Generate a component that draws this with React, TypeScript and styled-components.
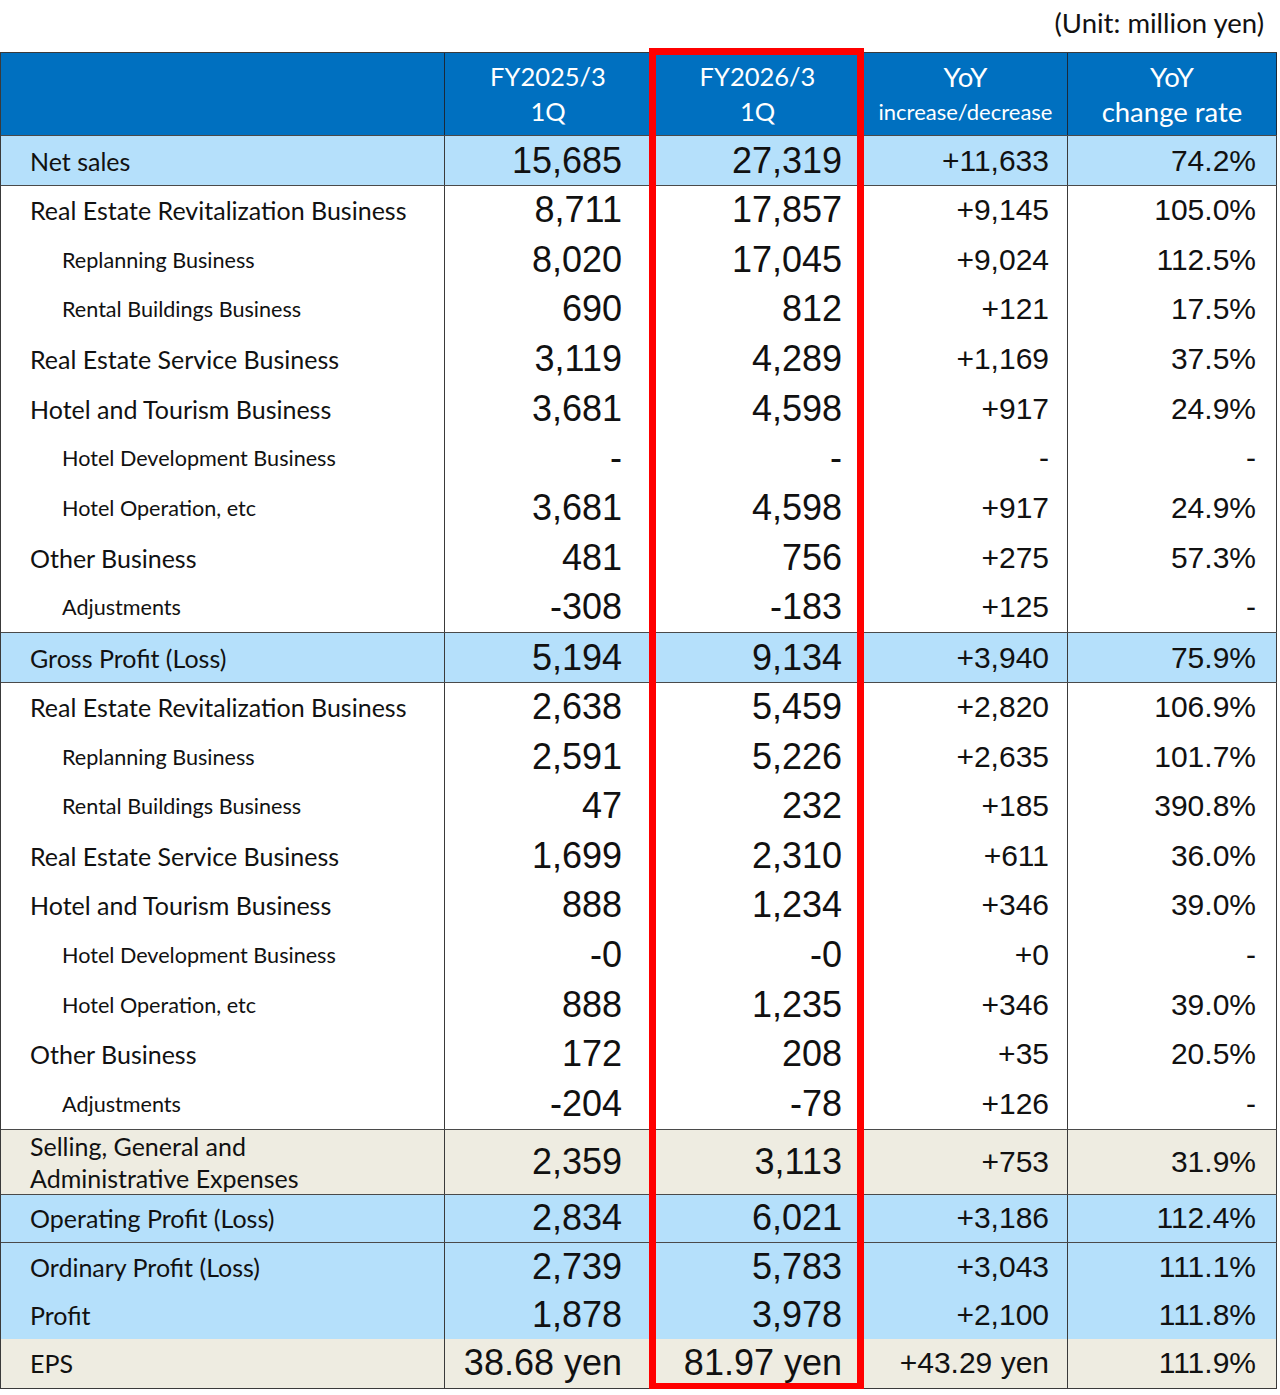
import React from "react";
import styled, { createGlobalStyle } from "styled-components";

const Global = createGlobalStyle`
  html, body { margin: 0; padding: 0; background: #ffffff; }
  body { font-family: "Lato", "Open Sans", sans-serif; color: #000; }
`;

type Kind = "blue" | "white" | "beige";

const bg: Record<Kind, string> = {
  blue: "#b5e0fb",
  white: "#ffffff",
  beige: "#eeece1",
};

const Page = styled.div`
  width: 1280px;
  position: relative;
`;

const Unit = styled.div`
  height: 52px;
  box-sizing: border-box;
  padding-right: 16px;
  text-align: right;
  font-size: 27.5px;
  line-height: 46px;
  color: #111;
`;

const TableWrap = styled.div`
  position: relative;
  width: 1277px;
`;

const Table = styled.div`
  border-left: 1px solid #3a3a3a;
  border-top: 1px solid #3a3a3a;
  border-bottom: 1px solid #3a3a3a;
`;

const Row = styled.div<{ $kind: Kind; $h: number; $line?: boolean }>`
  display: grid;
  grid-template-columns: 444px 207px 212px 204px 209px;
  height: ${(p) => p.$h}px;
  background: ${(p) => bg[p.$kind]};
  box-sizing: border-box;
  border-top: ${(p) => (p.$line ? "1.5px solid #4a4a4a" : "none")};
`;

const HeaderRow = styled.div`
  display: grid;
  grid-template-columns: 444px 207px 212px 204px 209px;
  height: 82px;
  background: #0070c0;
  color: #fff;
`;

const HeadCell = styled.div<{ $size?: number }>`
  border-right: 1px solid #1a2a3a;
  display: flex;
  flex-direction: column;
  align-items: center;
  justify-content: center;
  font-size: ${(p) => p.$size ?? 25.5}px;
  line-height: 35px;
  text-align: center;
`;

const HeadSmall = styled.span`
  font-size: 22px;
  line-height: 36px;
`;

const LabelCell = styled.div<{ $indent?: boolean }>`
  border-right: 1px solid #3a3a3a;
  display: flex;
  align-items: center;
  padding-left: ${(p) => (p.$indent ? 61 : 29)}px;
  font-size: ${(p) => (p.$indent ? 21.6 : 25)}px;
  line-height: 32px;
  color: #111;
`;

const NumCell = styled.div<{ $big?: boolean; $pad: number }>`
  border-right: 1px solid #3a3a3a;
  display: flex;
  align-items: center;
  justify-content: flex-end;
  padding-right: ${(p) => p.$pad}px;
  font-family: "Liberation Sans", Arial, sans-serif;
  font-size: ${(p) => (p.$big ? 36 : 30)}px;
  color: #111;
  white-space: nowrap;
`;

const RedBox = styled.div`
  position: absolute;
  left: 649px;
  top: -4px;
  width: 215px;
  height: 1342px;
  box-sizing: border-box;
  border: 7px solid #ff0000;
  pointer-events: none;
`;

type R = {
  label: React.ReactNode;
  v: [string, string, string, string];
  kind: Kind;
  h: number;
  indent?: boolean;
  line?: boolean;
};

const rows: R[] = [
  { label: "Net sales", v: ["15,685", "27,319", "+11,633", "74.2%"], kind: "blue", h: 50 },
  { label: "Real Estate Revitalization Business", v: ["8,711", "17,857", "+9,145", "105.0%"], kind: "white", h: 49.7, line: true },
  { label: "Replanning Business", indent: true, v: ["8,020", "17,045", "+9,024", "112.5%"], kind: "white", h: 49.7 },
  { label: "Rental Buildings Business", indent: true, v: ["690", "812", "+121", "17.5%"], kind: "white", h: 49.7 },
  { label: "Real Estate Service Business", v: ["3,119", "4,289", "+1,169", "37.5%"], kind: "white", h: 49.7 },
  { label: "Hotel and Tourism Business", v: ["3,681", "4,598", "+917", "24.9%"], kind: "white", h: 49.7 },
  { label: "Hotel Development Business", indent: true, v: ["-", "-", "-", "-"], kind: "white", h: 49.7 },
  { label: "Hotel Operation, etc", indent: true, v: ["3,681", "4,598", "+917", "24.9%"], kind: "white", h: 49.7 },
  { label: "Other Business", v: ["481", "756", "+275", "57.3%"], kind: "white", h: 49.7 },
  { label: "Adjustments", indent: true, v: ["-308", "-183", "+125", "-"], kind: "white", h: 49.7 },
  { label: "Gross Profit (Loss)", v: ["5,194", "9,134", "+3,940", "75.9%"], kind: "blue", h: 50, line: true },
  { label: "Real Estate Revitalization Business", v: ["2,638", "5,459", "+2,820", "106.9%"], kind: "white", h: 49.6, line: true },
  { label: "Replanning Business", indent: true, v: ["2,591", "5,226", "+2,635", "101.7%"], kind: "white", h: 49.6 },
  { label: "Rental Buildings Business", indent: true, v: ["47", "232", "+185", "390.8%"], kind: "white", h: 49.6 },
  { label: "Real Estate Service Business", v: ["1,699", "2,310", "+611", "36.0%"], kind: "white", h: 49.6 },
  { label: "Hotel and Tourism Business", v: ["888", "1,234", "+346", "39.0%"], kind: "white", h: 49.6 },
  { label: "Hotel Development Business", indent: true, v: ["-0", "-0", "+0", "-"], kind: "white", h: 49.6 },
  { label: "Hotel Operation, etc", indent: true, v: ["888", "1,235", "+346", "39.0%"], kind: "white", h: 49.6 },
  { label: "Other Business", v: ["172", "208", "+35", "20.5%"], kind: "white", h: 49.6 },
  { label: "Adjustments", indent: true, v: ["-204", "-78", "+126", "-"], kind: "white", h: 49.6 },
  {
    label: (
      <span>
        Selling, General and
        <br />
        Administrative Expenses
      </span>
    ),
    v: ["2,359", "3,113", "+753", "31.9%"],
    kind: "beige",
    h: 65,
    line: true,
  },
  { label: "Operating Profit (Loss)", v: ["2,834", "6,021", "+3,186", "112.4%"], kind: "blue", h: 48, line: true },
  { label: "Ordinary Profit (Loss)", v: ["2,739", "5,783", "+3,043", "111.1%"], kind: "blue", h: 49, line: true },
  { label: "Profit", v: ["1,878", "3,978", "+2,100", "111.8%"], kind: "blue", h: 48 },
  { label: "EPS", v: ["38.68 yen", "81.97 yen", "+43.29 yen", "111.9%"], kind: "beige", h: 49 },
];

const pads = [29, 21, 18, 20];

export default function App() {
  return (
    <Page>
      <Global />
      <Unit>(Unit: million yen)</Unit>
      <TableWrap>
        <Table>
          <HeaderRow>
            <HeadCell />
            <HeadCell>
              <span>FY2025/3</span>
              <span>1Q</span>
            </HeadCell>
            <HeadCell>
              <span>FY2026/3</span>
              <span>1Q</span>
            </HeadCell>
            <HeadCell $size={27.5}>
              <span>YoY</span>
              <HeadSmall>increase/decrease</HeadSmall>
            </HeadCell>
            <HeadCell $size={27.5}>
              <span>YoY</span>
              <span>change rate</span>
            </HeadCell>
          </HeaderRow>
          {rows.map((r, i) => (
            <Row key={i} $kind={r.kind} $h={r.h} $line={i === 0 ? true : r.line}>
              <LabelCell $indent={r.indent}>{r.label}</LabelCell>
              {r.v.map((val, j) => (
                <NumCell key={j} $big={j < 2} $pad={pads[j]}>
                  {val}
                </NumCell>
              ))}
            </Row>
          ))}
        </Table>
        <RedBox />
      </TableWrap>
    </Page>
  );
}
